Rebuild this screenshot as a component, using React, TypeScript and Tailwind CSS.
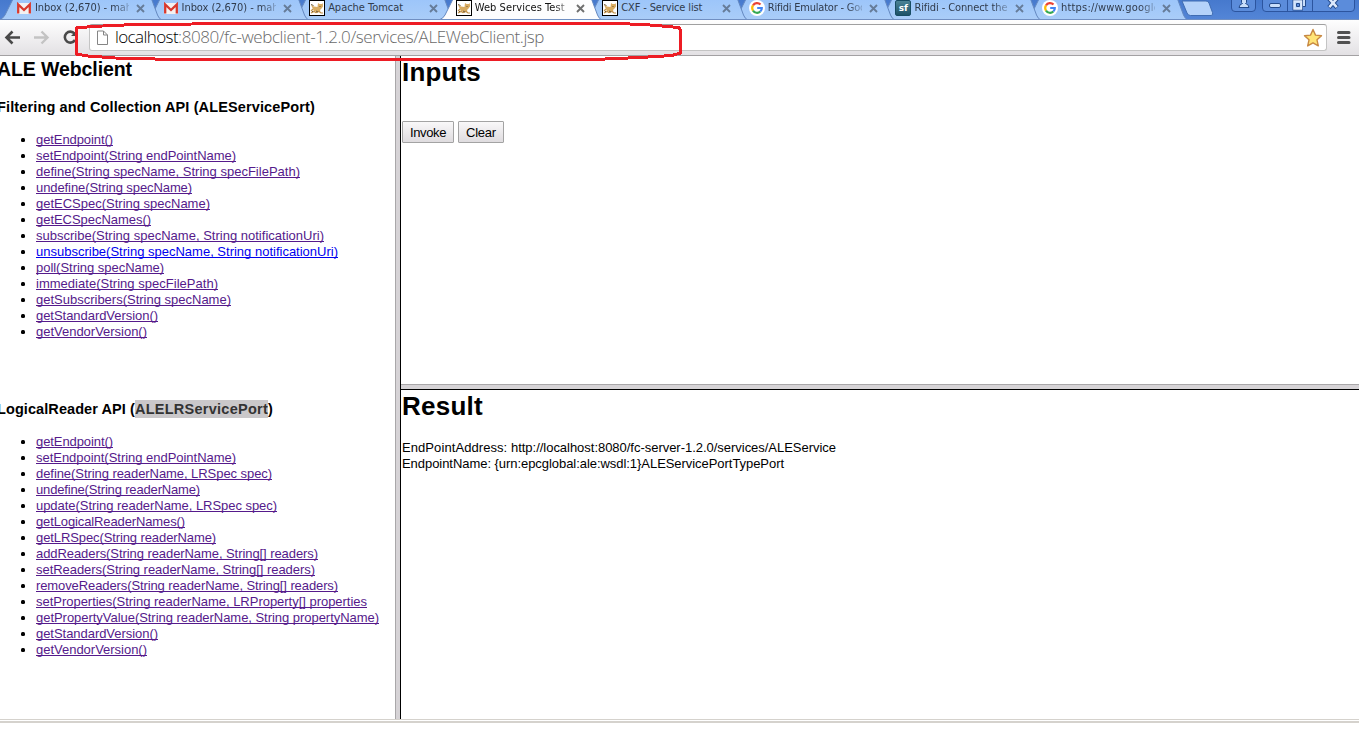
import { useLayoutEffect, useRef, type ReactNode } from "react";

/** Text whose tracking is set so that it takes exactly `width` pixels. */
function Fit({ width, className = "", children }: { width: number; className?: string; children: string }) {
  const ref = useRef<HTMLSpanElement>(null);
  useLayoutEffect(() => {
    const el = ref.current;
    if (!el) return;
    el.style.letterSpacing = "0px";
    const natural = el.getBoundingClientRect().width;
    el.style.letterSpacing = `${(width - natural) / children.length}px`;
  }, [width, children]);
  return (
    <span ref={ref} className={`inline-block whitespace-pre ${className}`}>
      {children}
    </span>
  );
}

type Method = { label: string; width: number; fresh?: boolean };

const collectionMethods: Method[] = [
  { label: "getEndpoint()", width: 77 },
  { label: "setEndpoint(String endPointName)", width: 200 },
  { label: "define(String specName, String specFilePath)", width: 264 },
  { label: "undefine(String specName)", width: 156 },
  { label: "getECSpec(String specName)", width: 174 },
  { label: "getECSpecNames()", width: 115 },
  { label: "subscribe(String specName, String notificationUri)", width: 288 },
  { label: "unsubscribe(String specName, String notificationUri)", width: 302, fresh: true },
  { label: "poll(String specName)", width: 128 },
  { label: "immediate(String specFilePath)", width: 182 },
  { label: "getSubscribers(String specName)", width: 195 },
  { label: "getStandardVersion()", width: 122 },
  { label: "getVendorVersion()", width: 111 },
];

const readerMethods: Method[] = [
  { label: "getEndpoint()", width: 77 },
  { label: "setEndpoint(String endPointName)", width: 200 },
  { label: "define(String readerName, LRSpec spec)", width: 236 },
  { label: "undefine(String readerName)", width: 164 },
  { label: "update(String readerName, LRSpec spec)", width: 241 },
  { label: "getLogicalReaderNames()", width: 149 },
  { label: "getLRSpec(String readerName)", width: 180 },
  { label: "addReaders(String readerName, String[] readers)", width: 282 },
  { label: "setReaders(String readerName, String[] readers)", width: 279 },
  { label: "removeReaders(String readerName, String[] readers)", width: 302 },
  { label: "setProperties(String readerName, LRProperty[] properties", width: 331 },
  { label: "getPropertyValue(String readerName, String propertyName)", width: 343 },
  { label: "getStandardVersion()", width: 122 },
  { label: "getVendorVersion()", width: 111 },
];

function MethodList({ methods }: { methods: Method[] }) {
  return (
    <ul className="text-[13px] leading-4">
      {methods.map((m) => (
        <li key={m.label} className="flex h-4 items-start">
          <span className="mt-[6px] mr-[11px] ml-[21px] size-1 shrink-0 rounded-[1.5px] bg-black" />
          <a
            className={
              m.fresh
                ? "h-[14px] border-b border-[#0000ee] leading-[15px] text-[#0000ee]"
                : "h-[14px] border-b border-[#551a8b] leading-[15px] text-[#551a8b]"
            }
          >
            <Fit width={m.width}>{m.label}</Fit>
          </a>
        </li>
      ))}
    </ul>
  );
}

function GmailIcon() {
  return (
    <svg width="16" height="16" viewBox="0 0 16 16">
      <rect x="1" y="3" width="14" height="11" rx="1" fill="#f4f1f1" />
      <path d="M2.2 13.500V4.500L8 10l5.800-5.500v9" fill="none" stroke="#d8392e" strokeWidth="2.300" />
    </svg>
  );
}

function TomcatIcon() {
  return (
    <svg width="16" height="16" viewBox="0 0 16 16">
      <rect x="0.5" y="0.5" width="15" height="15" fill="#fff" stroke="#000" />
      <path d="M2 5l3 1.500 3.500.5L9 3l1.500 1H13l.8-1 .2 3.500-1.500 2L11 10l.5 1.500H5L4 9z" fill="#d9ac62" />
      <path d="M2 13l3-1.500 2 1 3-1 2 1.500h2M4 9l-2 2" stroke="#c08f45" strokeWidth="1.200" fill="none" />
      <path d="M2 4.500l2.500 1M10.500 6.500h1M7 11l2 1M3 12l1-1" stroke="#6d5837" strokeWidth="1" />
    </svg>
  );
}

function GoogleIcon() {
  return (
    <svg width="16" height="16" viewBox="0 0 16 16">
      <circle cx="8" cy="8" r="8" fill="#fff" />
      <g fill="none" strokeWidth="2.200">
        <path d="M4 5.400A4.800 4.800 0 0 1 11.500 4.600" stroke="#ea4335" />
        <path d="M4 5.400A4.800 4.800 0 0 0 4 10.600" stroke="#fbbc05" />
        <path d="M4 10.600A4.800 4.800 0 0 0 11.300 11.500" stroke="#34a853" />
        <path d="M11.300 11.500A4.600 4.600 0 0 0 12.800 8H8.200" stroke="#4285f4" />
      </g>
    </svg>
  );
}

function SourceForgeIcon() {
  return (
    <span className="flex size-4 items-center justify-center rounded-[2px] border border-[#174c63] bg-linear-to-b from-[#4b8396] to-[#1d5267] font-['DejaVu_Sans'] text-[9px] leading-none font-bold text-white">
      sf
    </span>
  );
}

type Tab = { title: string; width: number; icon: ReactNode; layer: string; active?: boolean; faded?: boolean };

const tabs: Tab[] = [
  { title: "Inbox (2,670) - mah", width: 97, icon: <GmailIcon />, layer: "z-[8]", faded: true },
  { title: "Inbox (2,670) - mah", width: 97, icon: <GmailIcon />, layer: "z-[7]", faded: true },
  { title: "Apache Tomcat", width: 75, icon: <TomcatIcon />, layer: "z-[6]" },
  { title: "Web Services Test", width: 90, icon: <TomcatIcon />, layer: "z-[9]", active: true, faded: true },
  { title: "CXF - Service list", width: 81, icon: <TomcatIcon />, layer: "z-[4]" },
  { title: "Rifidi Emulator - Goo", width: 98, icon: <GoogleIcon />, layer: "z-[3]", faded: true },
  { title: "Rifidi - Connect the", width: 93, icon: <SourceForgeIcon />, layer: "z-[2]", faded: true },
  { title: "https://www.google", width: 99, icon: <GoogleIcon />, layer: "z-[1]", faded: true },
];

function BrowserTab({ tab }: { tab: Tab }) {
  return (
    <div className={`relative h-5 w-[146.57px] shrink-0 ${tab.layer}`}>
      <svg className="absolute top-0 left-0 overflow-visible" width="147" height="20">
        <defs>
          <linearGradient id="idle" x1="0" y1="0" x2="0" y2="1">
            <stop offset="0" stopColor="#9cc5fa" />
            <stop offset="1" stopColor="#aacdf8" />
          </linearGradient>
        </defs>
        <path
          d="M6 -1L-2 15Q-4 18.500 -7 19.500L154 19.500Q152 18.500 150.500 15L144.500 -1Z"
          fill={tab.active ? "#fdfdfe" : "url(#idle)"}
        />
        <path
          d="M6 -1L-2 15Q-4 18.500 -7 19.500M144.500 -1L150.500 15Q152 18.500 154 19.500"
          fill="none"
          stroke="#6488c0"
          strokeWidth="1"
        />
      </svg>
      <div className="relative flex h-4 items-center pl-[9px]">
        <div className="size-4 shrink-0">{tab.icon}</div>
        <div
          className={
            tab.faded
              ? "ml-[3px] w-[94px] shrink-0 overflow-hidden leading-4 [mask-image:linear-gradient(to_right,#000_84%,#0004)]"
              : "ml-[3px] w-[94px] shrink-0 overflow-hidden leading-4"
          }
        >
          <Fit width={tab.width} className={tab.active ? "text-[#111]" : "text-[#303b4c]"}>
            {tab.title}
          </Fit>
        </div>
        <svg className="ml-[7px]" width="9" height="9" viewBox="0 0 9 9">
          <path d="M1 1l7 7M8 1l-7 7" stroke={tab.active ? "#6f6f6f" : "#667c99"} strokeWidth="1.900" />
        </svg>
      </div>
    </div>
  );
}

function WindowControls() {
  return (
    <svg width="130" height="14" viewBox="0 0 130 14">
      <g fill="#5b8cdb" stroke="#2c559f">
        <path d="M1.500-2V8q0 3.500 3.500 3.500H22q3.500 0 3.500-3.500V-2z" />
        <path d="M32.500-2V8q0 3.500 3.500 3.500H121q3.500 0 3.500-3.500V-2z" />
        <path d="M57.500 0v11.500M82.500 0v11.500" />
      </g>
      <g fill="#c9defa" stroke="#244b8c">
        <path d="M11.500-1v3.500l1 1q-3 .5-3.500 4h10q-.5-3.500-3.500-4l1-1V-1z" />
        <rect x="39.500" y="3.500" width="11" height="4" rx="1.500" />
        <path d="M67.500-2h8v8.500h-3" />
        <path d="M64 1h7.500v8H64z" strokeWidth="3" />
        <path d="M64 1h7.500v8H64z" stroke="#dce9fc" strokeWidth="1.500" />
        <path d="M66.500 3.500h3v3h-3z" fill="#5b8cdb" />
      </g>
      <path d="M99-1.500l8 9M107-1.500l-8 9" stroke="#244b8c" strokeWidth="4.500" />
      <path d="M99.300-1.200l7.400 8.300M106.700-1.200l-7.400 8.300" stroke="#dce9fc" strokeWidth="2.500" />
    </svg>
  );
}

function TabStrip() {
  return (
    <div className="flex h-5 overflow-hidden border-b border-[#708fc2] bg-linear-to-b from-[#4679cd] to-[#5385d7] pl-[7px] font-['DejaVu_Sans_Condensed','DejaVu_Sans',sans-serif] text-[11px]">
      {tabs.map((t, i) => (
        <BrowserTab key={i} tab={t} />
      ))}
      <svg className="ml-px shrink-0" width="34" height="18" viewBox="0 0 34 18">
        <path d="M1 1L6 13q1 2.500 3.500 2.500H30q2.500 0 1.500-3L28 3Q27 1 25 1z" fill="#b4d2fa" stroke="#3f6cb2" />
      </svg>
      <div className="ml-[15px] shrink-0">
        <WindowControls />
      </div>
    </div>
  );
}

function Toolbar() {
  return (
    <div className="flex h-9 items-start border-b border-[#a3a1a3] bg-linear-to-b from-[#fefefe] to-[#e3e1e4] pt-1">
      <svg width="78" height="28" viewBox="0 0 78 28">
        <path d="M20 13.500H7M12.500 7.500L6.500 13.500l6 6" fill="none" stroke="#494949" strokeWidth="2.600" />
        <path d="M34 13.500h13M41.500 7.500l6 6-6 6" fill="none" stroke="#c3c3c3" strokeWidth="2.400" />
        <path d="M74.500 9.500A5.500 5.500 0 1 0 75 16" fill="none" stroke="#494949" strokeWidth="2.600" />
        <path d="M77 6v6h-6z" fill="#494949" />
      </svg>
      <div className="ml-[11px] flex h-[27px] w-[1238px] items-center rounded-[3px] border border-[#c4c4c4] border-t-[#a0a0a0] bg-white pl-[6px]">
        <svg width="13" height="16" viewBox="0 0 13 16">
          <path d="M1.500 1h6L11.500 5v9.500h-10zM7.500 1v4h4" fill="#fff" stroke="#858585" />
        </svg>
        <div className="mb-[2px] ml-[6px] flex font-['Open_Sans',sans-serif] text-[17px] leading-6 font-light">
          <Fit width={63} className="text-black">
            localhost
          </Fit>
          <Fit width={366} className="text-[#696969]">
            :8080/fc-webclient-1.2.0/services/ALEWebClient.jsp
          </Fit>
        </div>
        <svg className="mr-[3px] ml-auto" width="20" height="20" viewBox="0 0 20 20">
          <path
            d="M10 1.500l2.500 5.600 6 .6-4.500 4.100 1.300 6.100L10 14.800l-5.300 3.100L6 11.800 1.500 7.700l6-.6z"
            fill="#ffe477"
            stroke="#c88943"
            strokeWidth="1.400"
            strokeLinejoin="round"
          />
        </svg>
      </div>
      <svg className="ml-[10px]" width="14" height="27" viewBox="0 0 14 27">
        <path d="M1.500 8.500h10.500M1.500 13.500h10.500M1.500 18.500h10.500" stroke="#515151" strokeWidth="3" strokeLinecap="round" />
      </svg>
    </div>
  );
}

function PushButton({ label, width, className }: { label: string; width: number; className: string }) {
  return (
    <button
      className={`flex h-[22px] items-center justify-center rounded-[1px] border border-[#a3a3a3] bg-linear-to-b from-[#f9f8f9] to-[#dfdcdf] pt-px text-[13px] leading-4 ${className}`}
    >
      <Fit width={width}>{label}</Fit>
    </button>
  );
}

export default function App() {
  return (
    <div className="relative h-[730px] w-[1364px] overflow-hidden bg-white font-['Liberation_Sans',Arial,sans-serif] text-black">
      <div className="flex h-[723px] w-[1359px] flex-col">
        <TabStrip />
        <Toolbar />
        <div className="flex h-[663px]">
          <div className="w-[395px] shrink-0 overflow-hidden">
            <h2 className="-ml-[3px] pt-px text-[19.5px] leading-6 font-bold">
              <Fit width={135}>ALE Webclient</Fit>
            </h2>
            <h3 className="mt-[17px] -ml-[3px] h-[18px] text-[14.5px] leading-[18px] font-bold">
              <Fit width={318}>Filtering and Collection API (ALEServicePort)</Fit>
            </h3>
            <div className="pt-4">
              <MethodList methods={collectionMethods} />
            </div>
            <h3 className="mt-[60px] -ml-[3px] flex h-[18px] text-[14.5px] leading-[18px] font-bold">
              <Fit width={138}>{"LogicalReader API ("}</Fit>
              <Fit width={133} className="bg-[#cac8ca] text-[#333]">
                ALELRServicePort
              </Fit>
              <span>)</span>
            </h3>
            <div className="pt-4">
              <MethodList methods={readerMethods} />
            </div>
          </div>
          <div className="w-[6px] shrink-0 border-r border-l border-r-black border-l-[#a9a7a9] bg-[#d6d3d6]" />
          <div className="flex grow flex-col">
            <div className="h-[328px] pl-px">
              <h1 className="text-[26px] leading-8 font-bold">
                <Fit width={79}>Inputs</Fit>
              </h1>
              <div className="mt-[33px] flex gap-1">
                <PushButton label="Invoke" width={36} className="w-[52px]" />
                <PushButton label="Clear" width={30} className="w-[46px]" />
              </div>
            </div>
            <div className="h-[6px] border-t border-b border-t-[#a9a7a9] border-b-black bg-[#d6d3d6]" />
            <div className="pl-px">
              <h1 className="text-[26px] leading-8 font-bold">
                <Fit width={81}>Result</Fit>
              </h1>
              <div className="mt-[18px] flex flex-col text-[13px] leading-4">
                <div className="flex h-4">
                  <Fit width={109}>{"EndPointAddress: "}</Fit>
                  <Fit width={325}>http://localhost:8080/fc-server-1.2.0/services/ALEService</Fit>
                </div>
                <div className="h-4">
                  <Fit width={382}>{"EndpointName: {urn:epcglobal:ale:wsdl:1}ALEServicePortTypePort"}</Fit>
                </div>
              </div>
            </div>
          </div>
        </div>
        <div className="h-1 border-t border-b-2 border-[#d5d2cd]" />
      </div>

      <svg className="absolute top-0 left-0" width="700" height="64" viewBox="0 0 700 64">
        <path
          d="M76.500 54V28L92 26.500L135 24.500L250 23.500H620L650 25L679 27.500L680.500 30V53L672 55.500L640 57.500L605 59H155L115 58L88 56Z"
          fill="none"
          stroke="#ed1c24"
          strokeWidth="3"
          strokeLinejoin="round"
          shapeRendering="crispEdges"
        />
      </svg>
    </div>
  );
}
